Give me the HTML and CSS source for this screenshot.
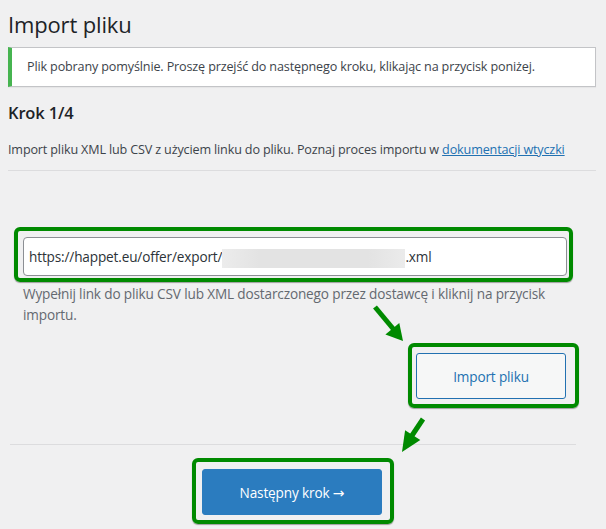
FILE: index.html
```html
<!DOCTYPE html>
<html lang="pl">
<head>
    <meta charset="UTF-8">
    <meta name="viewport" content="width=device-width, initial-scale=1.0">
    <title>Import pliku</title>
    <link rel="stylesheet" href="styles.css">
</head>
<body>

<div class="wrap">
    <h1 class="page-title">Import pliku</h1>

    <div class="notice notice-success">
        <p>Plik pobrany pomyślnie. Proszę przejść do następnego kroku, klikając na przycisk poniżej.</p>
    </div>

    <h2 class="step-title">Krok 1/4</h2>
    <p class="intro">Import pliku XML lub CSV z użyciem linku do pliku. Poznaj proces importu w <a href="#">dokumentacji wtyczki</a></p>
    <hr class="sep">

    <div class="step-box">
        <div class="mark mark-url">
            <div class="url-field">https://happet.eu/offer/export/<span class="redacted"></span>.xml</div>
        </div>
        <p class="help">Wypełnij link do pliku CSV lub XML dostarczonego przez dostawcę i kliknij na przycisk importu.</p>

        <div class="import-row">
            <div class="mark mark-import">
                <button class="btn btn-secondary">Import pliku</button>
            </div>
        </div>

        <hr class="sep sep-bottom">

        <div class="next-row">
            <div class="mark mark-next">
                <button class="btn btn-primary">Następny krok <span class="arrow">→</span></button>
            </div>
        </div>
    </div>
</div>

<!-- annotation arrows drawn over the page -->
<svg class="arrows" width="606" height="529" viewBox="0 0 606 529">
    <line x1="375" y1="307" x2="395" y2="331" stroke="#008a00" stroke-width="5"/>
    <polygon points="403,341 385.4,334.5 399.3,323.1" fill="#008a00"/>
    <line x1="423" y1="419" x2="411" y2="437" stroke="#008a00" stroke-width="5"/>
    <polygon points="402,452 405.1,430.3 420.3,439.9" fill="#008a00"/>
</svg>

</body>
</html>
```

FILE: styles.css
```css
body {
    font-family: "Open Sans", "Noto Sans", sans-serif;
    font-size: 12.6px;
    letter-spacing: -0.15px;
    color: #3c434a;
    background: #f0f0f1;
    margin: 0;
    position: relative;
    height: 529px;
    overflow: hidden;
}
.wrap {
    padding: 0 10px 0 8px;
}
.page-title {
    font-size: 22px;
    font-weight: 400;
    color: #1d2327;
    line-height: 30px;
    margin: 9px 0 0;
}
.notice {
    background: #fff;
    border: 1px solid #c3c4c7;
    border-left: 4px solid #46b450;
    box-shadow: 0 1px 1px rgba(0, 0, 0, 0.04);
    margin-top: 8px;
    padding: 1px 12px;
}
.notice p {
    margin: 8px 0;
    padding: 0 3px;
    line-height: 20px;
}
.step-title {
    font-size: 16.5px;
    font-weight: 600;
    color: #1d2327;
    margin: 14px 0 0;
    line-height: 24px;
}
.intro {
    margin: 15px 0 0;
    line-height: 20px;
}
.intro a {
    color: #2271b1;
}
.sep {
    border: 0;
    border-top: 1px solid #dcdcde;
    margin: 10px 0 0;
}
.step-box {
    margin: 0 23px 0 2px;
}
.mark {
    border: 4px solid #008a00;
    border-radius: 6px;
    box-shadow: 0 1px 1px rgba(0, 0, 0, 0.35);
}
.mark-url {
    margin: 56px 0 0 4px;
    padding: 6px 2px 2px 5px;
}
.url-field {
    background: #fff;
    border: 1px solid #8c8f94;
    border-radius: 4px;
    height: 37px;
    line-height: 38px;
    padding: 0 5px;
    font-size: 13.6px;
    color: #2c3338;
}
.redacted {
    display: inline-block;
    width: 183px;
    height: 19px;
    vertical-align: middle;
    background: linear-gradient(90deg, #ececec, #e3e3e3 20%, #e3e3e3 80%, #ebebeb);
}
.help {
    font-size: 13.6px;
    line-height: 21px;
    color: #646970;
    margin: 1px 18px 0 13px;
}
.import-row {
    display: flex;
    justify-content: flex-end;
    margin: 18px -6px 0 0;
}
.mark-import {
    padding: 6px 9px 5px 4px;
}
.btn {
    font-family: inherit;
    font-size: 13.6px;
    letter-spacing: -0.15px;
    border-radius: 3px;
    cursor: pointer;
}
.btn-secondary {
    width: 150px;
    height: 46px;
    background: #f6f7f7;
    border: 1px solid #2271b1;
    color: #2271b1;
}
.btn-primary .arrow {
    font-family: "DejaVu Sans", sans-serif;
    font-size: 14px;
}
.sep-bottom {
    margin: 36px -3px 0 0;
}
.next-row {
    display: flex;
    justify-content: center;
    margin: 13px -3px 0 0;
}
.mark-next {
    padding: 7px 8px 5px 6px;
}
.btn-primary {
    width: 180px;
    height: 46px;
    background: #2b7cbf;
    border: 1px solid #2b7cbf;
    color: #fff;
}
.arrows {
    position: absolute;
    top: 0;
    left: 0;
    pointer-events: none;
}
```
